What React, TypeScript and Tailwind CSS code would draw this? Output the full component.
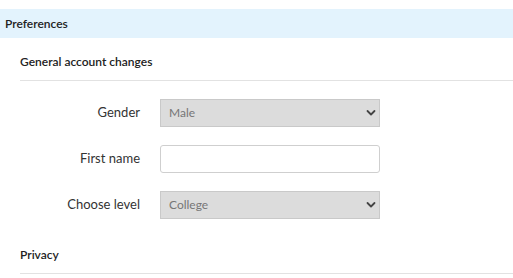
import React from "react";

function Chevron() {
  return (
    <svg
      className="pointer-events-none absolute right-[4px] top-1/2 -translate-y-1/2"
      width="10"
      height="7"
      viewBox="0 0 10 7"
      fill="none"
    >
      <path d="M1.5 1.5 L5 5 L8.5 1.5" stroke="#444" strokeWidth="1.8" strokeLinecap="round" strokeLinejoin="round" />
    </svg>
  );
}

function SelectField({ value }: { value: string }) {
  return (
    <div className="relative w-[220px] h-[28px]">
      <select
        defaultValue={value}
        className="appearance-none w-full h-full bg-[#dcdcdc] border border-[#c9c9c9] pl-[8px] text-[12px] text-[#767676] outline-none"
      >
        <option>{value}</option>
      </select>
      <Chevron />
    </div>
  );
}

function Row({ label, children }: { label: string; children: React.ReactNode }) {
  return (
    <div className="flex items-center h-[28px]">
      <div className="w-[120px] text-right text-[13px] text-[#333]">{label}</div>
      <div className="ml-[20px]">{children}</div>
    </div>
  );
}

export default function App() {
  return (
    <div className="w-[513px] h-[278px] bg-white overflow-hidden font-['Lato','Liberation_Sans',sans-serif] pt-[9px]">
      <div className="h-[29px] bg-[#e3f3fd] px-[5px] flex items-center text-[12px] font-semibold text-[#222]">
        Preferences
      </div>
      <div className="pl-[20px]">
        <div className="pt-[16px] pb-[10px] border-b border-[#e2e2e2] text-[12px] leading-[16px] font-semibold text-[#222]">
          General account changes
        </div>
        <div className="pt-[18px] flex flex-col gap-[18px]">
          <Row label="Gender">
            <SelectField value="Male" />
          </Row>
          <Row label="First name">
            <input className="w-[220px] h-[28px] bg-white border border-[#cfcfcf] rounded-[3px] outline-none px-[8px] text-[12px]" />
          </Row>
          <Row label="Choose level">
            <SelectField value="College" />
          </Row>
        </div>
        <div className="pt-[28px] pb-[10px] border-b border-[#e2e2e2] text-[12px] leading-[16px] font-semibold text-[#222]">
          Privacy
        </div>
      </div>
    </div>
  );
}
